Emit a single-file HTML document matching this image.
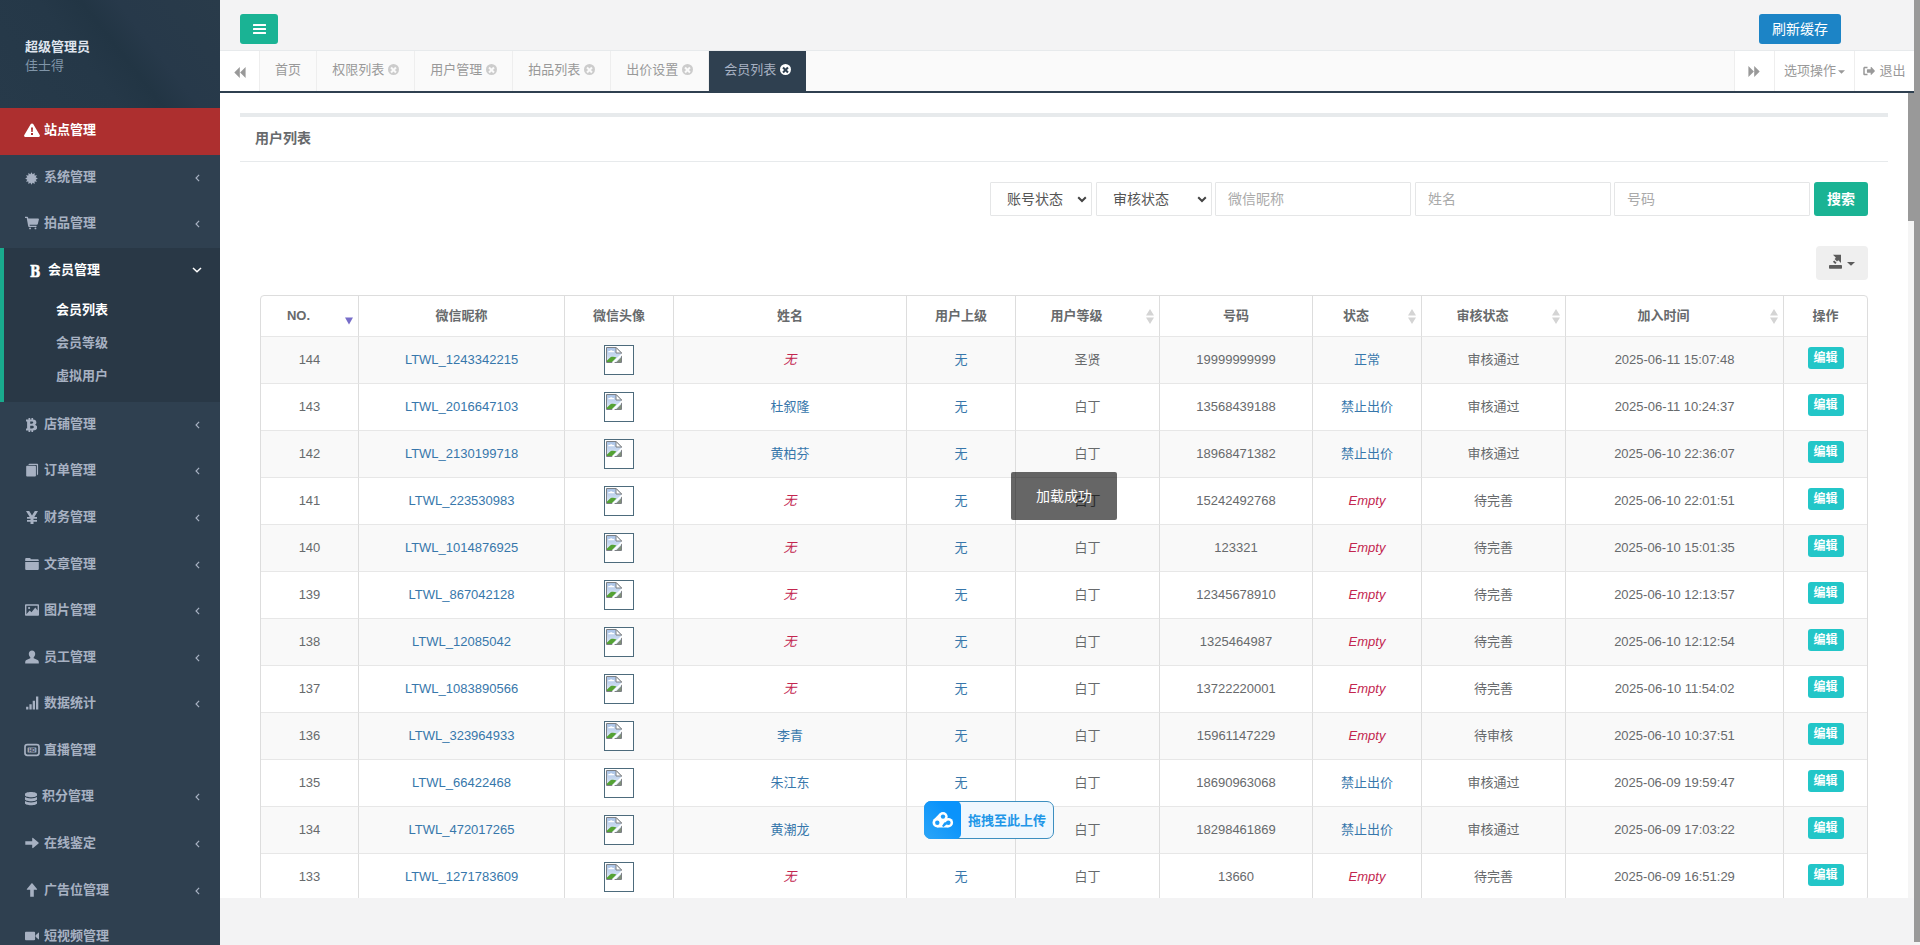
<!DOCTYPE html>
<html lang="zh-CN">
<head>
<meta charset="utf-8">
<title>后台管理</title>
<style>
*{box-sizing:border-box;}
html,body{margin:0;padding:0;width:1920px;height:945px;overflow:hidden;}
body{font-family:"Liberation Sans","Noto Sans CJK SC",sans-serif;font-size:13px;line-height:1.42857;color:#676a6c;background:#f3f3f4;position:relative;}
a{text-decoration:none;color:inherit;}
ul{list-style:none;margin:0;padding:0;}
svg{display:block;}

/* ---------- sidebar ---------- */
#side{position:absolute;left:0;top:0;width:220px;height:945px;background:#2f4050;overflow:hidden;}
#side .hd{height:108px;background:#263949;background-image:linear-gradient(52deg,#273a4a 0%,#253848 40%,#223544 54%,#27394a 66%,#293b4a 100%);padding:38px 25px 0 25px;}
#side .hd strong{display:block;color:#dfe4ed;font-weight:bold;font-size:13px;line-height:18px;}
#side .hd span{display:block;color:#8095a8;font-size:13px;line-height:19px;}
#side li.m>a{display:block;position:relative;height:46.57px;padding:14px 20px 14px 25px;color:#a7b1c2;font-weight:bold;font-size:13px;line-height:18.57px;white-space:nowrap;}
#side li.m>a .ic{position:absolute;left:25px;top:15px;width:14px;height:14px;}
#side li.m>a .tx{position:absolute;left:44px;top:13px;}
#side li.m>a .ar{position:absolute;left:195px;top:19px;width:5px;height:8px;}
#side li.site>a{background:#ad2f2f;color:#fff;}
#side li.act{background:#293846;border-left:4px solid #19aa8d;padding-bottom:9px;}
#side li.act>a{color:#fff;padding-left:21px;}
#side li.act>a .ic{left:25px;}
#side li.act>a .tx{left:44px;}
#side li.act>a .ar{left:188px;top:19px;width:10px;height:6px;}
#side .sub a{display:block;height:32.9px;line-height:18.57px;padding:7px 10px 7px 52px;color:#a7b1c2;font-weight:bold;}
#side .sub a.on{color:#fff;}

/* ---------- top ---------- */
#top{position:absolute;left:220px;top:0;width:1694px;height:51px;background:#f3f3f4;border-bottom:1px solid #e7eaec;}
#ham{position:absolute;left:20px;top:14px;width:38px;height:30px;background:#1ab394;border-radius:3px;}
#ham i{position:absolute;left:12.500px;width:13px;height:2.400px;background:#fff;border-radius:.5px;}
#refresh{position:absolute;left:1539px;top:14px;width:82px;height:30px;background:#1c84c6;border-radius:3px;color:#fff;font-size:14px;line-height:30px;text-align:center;}

/* ---------- tabs ---------- */
#tabs{position:absolute;left:220px;top:51px;width:1694px;height:42px;background:#fafafa;border-bottom:2px solid #2f4050;}
#tabs .t{position:absolute;top:0;height:40px;line-height:38px;font-size:13px;color:#999;border-right:1px solid #eee;text-align:center;white-space:nowrap;}
#tabs .t.on{background:#2f4050;color:#a7b1c2;border-right:0;}
#tabs .x{display:inline-block;width:11px;height:11px;border-radius:50%;background:#ccc;vertical-align:-1px;margin-left:0;position:relative;}
#tabs .t.on .x{background:#fff;}
#tabs .x:before,#tabs .x:after{content:"";position:absolute;left:2px;top:4.500px;width:7px;height:2px;background:#fafafa;transform:rotate(45deg);}
#tabs .x:after{transform:rotate(-45deg);}
#tabs .t.on .x:before,#tabs .t.on .x:after{background:#2f4050;}

#tabs .rn{position:absolute;top:0;height:40px;line-height:39px;background:#fff;color:#999;font-size:13px;text-align:center;white-space:nowrap;}
/* ---------- content ---------- */
#content{position:absolute;left:220px;top:93px;width:1688px;height:805px;background:#fff;overflow:hidden;}
#ibox{position:absolute;left:20px;top:20px;width:1648px;border-top:4px solid #e7eaec;}
#ibox h5{margin:0;position:absolute;left:15px;top:10.500px;font-size:14px;font-weight:bold;color:#676a6c;line-height:20px;}
#ibox .ln{position:absolute;left:0;top:44px;width:1648px;height:1px;background:#e7eaec;}
.fc{position:absolute;top:65px;height:34px;border:1px solid #e5e6e7;background:#fff;font-size:14px;line-height:32px;color:#555;padding-left:12px;border-radius:1px;}
.fc.ph{color:#aaa;}
.fc svg{position:absolute;right:4px;top:13px;}
#search{position:absolute;left:1574px;top:65px;width:54px;height:34px;background:#1ab394;border-radius:3px;color:#fff;font-weight:bold;font-size:14px;line-height:34px;text-align:center;}
#export{position:absolute;left:1576px;top:129px;width:52px;height:34px;background:#efefef;border-radius:4px;}

table{position:absolute;left:20px;top:177.500px;width:1608px;border-collapse:separate;border-spacing:0;table-layout:fixed;border:1px solid #ddd;border-radius:4px;font-size:13px;}
th,td{border-left:1px solid #ddd;border-top:1px solid #e7e7e7;text-align:center;padding:0;vertical-align:middle;overflow:hidden;white-space:nowrap;}
th:first-child,td:first-child{border-left:0;}
th{height:40px;padding-top:1px;border-top:0;font-weight:bold;color:#676a6c;position:relative;}
td{height:47px;color:#676a6c;padding-top:.8px;}
tbody tr:nth-child(odd) td{background:#f9f9f9;}
td a{color:#3777ab;}
td .e{color:#c3264f;font-style:italic;}
td .sh{display:inline-block;position:relative;left:11px;}
td .img{display:inline-block;width:30px;height:30px;border:1px solid #4d6b7c;vertical-align:middle;position:relative;background:#fff;}
td .btn{display:inline-block;width:36px;height:22px;line-height:22px;background:#23c6c8;color:#fff;border-radius:3px;font-size:12px;font-weight:bold;position:relative;top:-2px;}
th.s{padding-right:22px;}
th .so{position:absolute;right:5px;top:13px;width:8px;height:15px;}

#toast{position:absolute;left:1011px;top:472px;width:106px;height:48px;background:rgba(0,0,0,.6);border-radius:2px;color:#fff;font-size:14px;line-height:48px;text-align:center;}
#upl{position:absolute;left:924px;top:801px;width:130px;height:38px;border:1px solid #3d8fc0;border-radius:7px;background:#eff7fe;}
#upl .b{position:absolute;left:-1px;top:-1px;width:37px;height:38px;background:linear-gradient(45deg,#2ba5f7,#0a93fb 70%);border-radius:7px 5px 5px 7px;}
#upl .w{position:absolute;left:43px;top:0;line-height:37px;font-size:13px;font-weight:bold;color:#2196e8;white-space:nowrap;}

#sb1{position:absolute;left:1908px;top:93px;width:6px;height:805px;background:#f5f5f5;}
#sb1 i{position:absolute;left:0;top:0;width:6px;height:128px;background:#999;}
#sb2{position:absolute;left:1914px;top:0;width:6px;height:945px;background:#f5f5f5;}
#sb2 i{position:absolute;left:0;top:0;width:6px;height:942px;background:#999;}
</style>
</head>
<body>
<div id="side">
  <div class="hd"><strong>超级管理员</strong><span>佳士得</span></div>
  <ul id="menu">
<li class="m site"><a><svg class="ic" viewBox="0 0 16 14" style="width:16px;height:14px;top:14.500px;left:24px"><path fill="currentColor" fill-rule="evenodd" d="M8 .400c.5 0 1 .300 1.200.700l6.500 11c.5.900-.100 1.900-1.100 1.900H1.400c-1 0-1.600-1-1.100-1.900L6.800 1.100C7 .7 7.500.4 8 .4zM7 4.500l.300 4.500h1.400L9 4.500zM7 10.100v1.800h2v-1.800z"/></svg><span class="tx">站点管理</span></a></li>
<li class="m"><a><svg class="ic" viewBox="0 0 14 14" style="width:13px;height:13px;top:17px"><path fill="currentColor" d="M7.00 0.20L8.22 2.46L10.40 1.11L10.32 3.68L12.89 3.60L11.54 5.78L13.80 7.00L11.54 8.22L12.89 10.40L10.32 10.32L10.40 12.89L8.22 11.54L7.00 13.80L5.78 11.54L3.60 12.89L3.68 10.32L1.11 10.40L2.46 8.22L0.20 7.00L2.46 5.78L1.11 3.60L3.68 3.68L3.60 1.11L5.78 2.46z"/></svg><span class="tx">系统管理</span><svg class="ar" viewBox="0 0 6 10"><path d="M5 1L1.200 5 5 9" fill="none" stroke="currentColor" stroke-width="1.500"/></svg></a></li>
<li class="m"><a><svg class="ic" viewBox="0 0 14 14"><path fill="currentColor" d="M0 .8h2.300c.4 0 .7.300.8.700L3.300 2.500H13.200c.5 0 .9.500.7 1L12.800 8c-.1.500-.5.800-1 .8H4.600l.2 1h6.700v1.200H4c-.4 0-.7-.3-.8-.7L1.700 2H0zM4.100 12.400a.95.95 0 1 0 1.900 0a.95.95 0 1 0-1.900 0M9.500 12.400a.95.95 0 1 0 1.900 0a.95.95 0 1 0-1.900 0"/></svg><span class="tx">拍品管理</span><svg class="ar" viewBox="0 0 6 10"><path d="M5 1L1.200 5 5 9" fill="none" stroke="currentColor" stroke-width="1.500"/></svg></a></li>
<li class="m act"><a><span class="ic" style="font-family:'DejaVu Serif','Liberation Serif',serif;font-weight:bold;font-size:17px;line-height:14px;width:14px;left:24px;top:16px;text-align:center;transform:scaleX(.72);-webkit-text-stroke:.7px currentColor">B</span><span class="tx" style="left:44px">会员管理</span><svg class="ar" viewBox="0 0 10 6"><path d="M1 1l4 3.800L9 1" fill="none" stroke="currentColor" stroke-width="1.500"/></svg></a><div class="sub"><a class="on">会员列表</a><a>会员等级</a><a>虚拟用户</a></div></li>
<li class="m"><a><svg class="ic" viewBox="0 0 11.500 14" style="width:11.500px;height:14px;left:25.500px;top:16.500px"><path fill="currentColor" fill-rule="evenodd" d="M0 1.500h2.500V0h1.700v1.500h1.200V0H7.100v1.600c2 .2 3.300 1.100 3.300 2.800 0 1.100-.6 1.900-1.500 2.300 1.400.4 2.300 1.300 2.300 2.700 0 2-1.600 3-4.100 3.100V14H5.400v-1.500H4.200V14H2.500v-1.500H0v-1.900h1.100V3.400H0zM4.200 3.500v2.300h1.500c.9 0 1.500-.4 1.500-1.200s-.6-1.100-1.500-1.100zM4.200 7.800v2.700H6c1.100 0 1.800-.4 1.800-1.400S7.100 7.800 6 7.800z"/></svg><span class="tx">店铺管理</span><svg class="ar" viewBox="0 0 6 10"><path d="M5 1L1.200 5 5 9" fill="none" stroke="currentColor" stroke-width="1.500"/></svg></a></li>
<li class="m"><a><svg class="ic" viewBox="0 0 14 14" style="width:13px;left:26px"><path fill="currentColor" d="M2.300 1.500L3.500.4h8.700c.4 0 .8.300.8.800v10.300l-1.300 1.300V2.200c0-.4-.3-.7-.7-.7zM.2 3.300c0-.5.4-.9.900-.9h8.700c.5 0 .9.400.9.900v9.800c0 .5-.4.900-.9.900H1.100c-.5 0-.9-.4-.9-.9z"/></svg><span class="tx">订单管理</span><svg class="ar" viewBox="0 0 6 10"><path d="M5 1L1.200 5 5 9" fill="none" stroke="currentColor" stroke-width="1.500"/></svg></a></li>
<li class="m"><a><svg class="ic" viewBox="0 0 12 13" style="width:12px;height:13px;left:25.500px;top:15.500px"><path fill="currentColor" d="M0 0h3.200L6 4.600 8.800 0H12L8.300 5.900H11v1.900H7.500v1.100H11v1.900H7.500V13h-3v-2.200H1V8.900h3.500V7.800H1V5.900h2.700z"/></svg><span class="tx">财务管理</span><svg class="ar" viewBox="0 0 6 10"><path d="M5 1L1.200 5 5 9" fill="none" stroke="currentColor" stroke-width="1.500"/></svg></a></li>
<li class="m"><a><svg class="ic" viewBox="0 0 14 14"><path fill="currentColor" d="M.2 2c0-.5.4-.9.900-.9h3.700c.5 0 .9.400.9.900v.3h7.200c.5 0 .9.400.9.900v.8H.2zM.2 5h13.600v7.100c0 .5-.4.900-.9.900H1.100c-.5 0-.9-.4-.9-.9z"/></svg><span class="tx">文章管理</span><svg class="ar" viewBox="0 0 6 10"><path d="M5 1L1.200 5 5 9" fill="none" stroke="currentColor" stroke-width="1.500"/></svg></a></li>
<li class="m"><a><svg class="ic" viewBox="0 0 14 14"><path fill="currentColor" fill-rule="evenodd" d="M.8 1.300h12.400c.4 0 .8.400.8.800v9.800c0 .4-.4.800-.8.800H.8c-.4 0-.8-.4-.8-.8V2.100c0-.4.400-.8.800-.8zM1.400 2.700v8.600l3.300-3.700 1.800 1.600 3.800-4.800 2.300 3V2.700zM3 5a1.100 1.100 0 1 0 2.200 0A1.100 1.100 0 1 0 3 5"/></svg><span class="tx">图片管理</span><svg class="ar" viewBox="0 0 6 10"><path d="M5 1L1.200 5 5 9" fill="none" stroke="currentColor" stroke-width="1.500"/></svg></a></li>
<li class="m"><a><svg class="ic" viewBox="0 0 14 14"><path fill="currentColor" d="M7 .4c1.900 0 3.200 1.400 3.200 3.400 0 1.400-.6 2.700-1.500 3.500v.9l3.900 1.800c.8.400 1.200 1 1.200 1.900v1.500H.2v-1.500c0-.9.400-1.500 1.200-1.900l3.900-1.800v-.9C4.400 6.500 3.800 5.200 3.800 3.800 3.800 1.800 5.100.4 7 .4z"/></svg><span class="tx">员工管理</span><svg class="ar" viewBox="0 0 6 10"><path d="M5 1L1.200 5 5 9" fill="none" stroke="currentColor" stroke-width="1.500"/></svg></a></li>
<li class="m"><a><svg class="ic" viewBox="0 0 14 14"><path fill="currentColor" d="M11 .5h2.300v13H11zM7.700 4.800H10v8.700H7.700zM4.400 8.200h2.300v5.300H4.400zM1.100 10.700h2.300v2.800H1.100z"/></svg><span class="tx">数据统计</span><svg class="ar" viewBox="0 0 6 10"><path d="M5 1L1.200 5 5 9" fill="none" stroke="currentColor" stroke-width="1.500"/></svg></a></li>
<li class="m"><a><svg class="ic" viewBox="0 0 16 14" style="width:16px;left:24px"><rect x="1" y="1.600" width="14" height="10.800" rx="2.300" fill="none" stroke="currentColor" stroke-width="1.700"/><rect x="3.600" y="4.400" width="8.800" height="5.200" rx=".6" fill="currentColor"/><text x="8" y="8.700" font-size="4.600" font-weight="bold" text-anchor="middle" fill="#2f4050" font-family="Liberation Sans,sans-serif">HD</text></svg><span class="tx">直播管理</span></a></li>
<li class="m"><a><svg class="ic" viewBox="0 0 12 14" style="width:12px;top:17.500px"><path fill="currentColor" d="M6 0c3.300 0 6 .9 6 2v1.200c0 1.100-2.700 2-6 2s-6-.9-6-2V2C0 .9 2.700 0 6 0zM0 5c1 .900 3.400 1.400 6 1.400S11 5.900 12 5v2.200c0 1.100-2.700 2-6 2s-6-.9-6-2zM0 9c1 .900 3.400 1.400 6 1.400S11 9.900 12 9v2.200c0 1.100-2.700 2-6 2s-6-.9-6-2z"/></svg><span class="tx" style="left:42px">积分管理</span><svg class="ar" viewBox="0 0 6 10"><path d="M5 1L1.200 5 5 9" fill="none" stroke="currentColor" stroke-width="1.500"/></svg></a></li>
<li class="m"><a><svg class="ic" viewBox="0 0 14 14"><path fill="currentColor" d="M.3 5.200h6.900V2.300c0-.5.500-.7.900-.4l5.400 4.500c.4.300.4.800 0 1.100L8.100 12c-.4.300-.9.100-.9-.4V8.800H.3z"/></svg><span class="tx">在线鉴定</span><svg class="ar" viewBox="0 0 6 10"><path d="M5 1L1.200 5 5 9" fill="none" stroke="currentColor" stroke-width="1.500"/></svg></a></li>
<li class="m"><a><svg class="ic" viewBox="0 0 14 14"><path fill="currentColor" d="M5.200 13.700V6.800H2.300c-.5 0-.7-.5-.4-.9L6.400.5c.3-.4.800-.4 1.100 0L12 5.900c.3.400.1.900-.4.900H8.800v6.900z"/></svg><span class="tx">广告位管理</span><svg class="ar" viewBox="0 0 6 10"><path d="M5 1L1.200 5 5 9" fill="none" stroke="currentColor" stroke-width="1.500"/></svg></a></li>
<li class="m"><a><svg class="ic" viewBox="0 0 14 14"><path fill="currentColor" d="M.9 2.800h8.300c.5 0 .9.400.9.900v6.600c0 .5-.4.900-.9.900H.9c-.5 0-.9-.4-.9-.9V3.700c0-.5.400-.9.900-.9zM10.600 6.300L13.400 3.700c.3-.3.600-.1.600.2v6.200c0 .4-.3.500-.6.200L10.600 7.700z"/></svg><span class="tx">短视频管理</span></a></li>
  </ul>
</div>
<div id="top">
  <div id="ham"><i style="top:10px"></i><i style="top:14px"></i><i style="top:18px"></i></div>
  <div id="refresh">刷新缓存</div>
</div>
<div id="tabs">
  <div class="rn" style="left:0;width:40px;border-right:1px solid #eee"><svg viewBox="0 0 12 10" preserveAspectRatio="none" style="position:absolute;left:14px;top:15.500px;width:12px;height:11px"><path fill="#999" d="M5.800 0v10L.300 5zM11.600 0v10L6.100 5z"/></svg></div>
  <div class="t" style="left:40px;width:57px">首页</div>
  <div class="t" style="left:97px;width:98px">权限列表 <i class="x"></i></div>
  <div class="t" style="left:195px;width:98px">用户管理 <i class="x"></i></div>
  <div class="t" style="left:293px;width:98px">拍品列表 <i class="x"></i></div>
  <div class="t" style="left:391px;width:98px">出价设置 <i class="x"></i></div>
  <div class="t on" style="left:489px;width:97px">会员列表 <i class="x"></i></div>
  <div class="rn" style="left:1514px;width:40px;border-left:1px solid #eee"><svg viewBox="0 0 12 10" preserveAspectRatio="none" style="position:absolute;left:13px;top:15px;width:12px;height:11px"><path fill="#999" d="M.400 0v10l5.500-5zM6.200 0v10l5.500-5z"/></svg></div>
  <div class="rn" style="left:1554px;width:80px;border-left:1px solid #eee">选项操作<svg viewBox="0 0 8 4" style="display:inline-block;width:7px;height:4px;margin-left:2px;vertical-align:1px"><path fill="#999" d="M0 0h8L4 4z"/></svg></div>
  <div class="rn" style="left:1634px;width:60px;border-left:1px solid #eee"><svg viewBox="0 0 14 12" style="display:inline-block;width:12px;height:10px;vertical-align:-1px;margin-right:4px"><path fill="#999" d="M5.200.800v1.800H2.400c-.3 0-.5.200-.5.500v5.800c0 .3.200.5.500.5h2.800v1.800H1.800C.9 11.200.100 10.400.100 9.500v-7C.100 1.600.9.800 1.800.8zM9 1.700c0-.5.500-.7.900-.4l3.900 4c.3.400.3.900 0 1.300l-3.900 4c-.4.300-.9.100-.9-.4V8.200H5.200c-.4 0-.7-.3-.7-.7v-3c0-.4.300-.7.700-.7H9z"/></svg>退出</div>
</div>
<div id="content">
  <div id="ibox">
    <h5>用户列表</h5>
    <div class="ln"></div>
    <div class="fc" style="left:750px;width:102px;padding-left:16px">账号状态<svg viewBox="0 0 10 7" width="10" height="7"><path d="M1.200 1.200l3.800 3.800 3.800-3.800" fill="none" stroke="#444" stroke-width="2"/></svg></div>
    <div class="fc" style="left:856px;width:116px;padding-left:16px">审核状态<svg viewBox="0 0 10 7" width="10" height="7"><path d="M1.200 1.200l3.800 3.800 3.800-3.800" fill="none" stroke="#444" stroke-width="2"/></svg></div>
    <div class="fc ph" style="left:975px;width:196px">微信昵称</div>
    <div class="fc ph" style="left:1175px;width:196px">姓名</div>
    <div class="fc ph" style="left:1374px;width:196px">号码</div>
    <div id="search">搜索</div>
    <div id="export"><svg viewBox="0 0 52 34" style="position:absolute;left:0;top:0;width:52px;height:34px"><rect x="13" y="19" width="13" height="3.700" rx=".8" fill="#5c5c5c"/><path fill="#5c5c5c" d="M17 8.800h8v8.100l-2.700-2.700-1.300 1.300-2.400-2.400 1.300-1.300zM18.300 14.400l2.300 2.300-1.400 1.400-2.300-2.300z"/><path fill="#5c5c5c" d="M31 15.900h8l-4 3.900z"/></svg></div>
    <table>
<colgroup><col style="width:97px"><col style="width:206px"><col style="width:109px"><col style="width:233px"><col style="width:109px"><col style="width:144px"><col style="width:153px"><col style="width:109px"><col style="width:144px"><col style="width:218px"><col style="width:84px"></colgroup>
<thead><tr>
<th class="s">NO.<svg class="so" viewBox="0 0 8 15" style="top:15px"><path fill="#776dc9" d="M0 6.500h8L4 13.500z"/></svg></th>
<th>微信昵称</th>
<th>微信头像</th>
<th>姓名</th>
<th>用户上级</th>
<th class="s">用户等级<svg class="so" viewBox="0 0 8 15"><path fill="#d4d4d4" d="M4 0l4 6.500H0zM4 15L0 8.500h8z"/></svg></th>
<th>号码</th>
<th class="s">状态<svg class="so" viewBox="0 0 8 15"><path fill="#d4d4d4" d="M4 0l4 6.500H0zM4 15L0 8.500h8z"/></svg></th>
<th class="s">审核状态<svg class="so" viewBox="0 0 8 15"><path fill="#d4d4d4" d="M4 0l4 6.500H0zM4 15L0 8.500h8z"/></svg></th>
<th class="s">加入时间<svg class="so" viewBox="0 0 8 15"><path fill="#d4d4d4" d="M4 0l4 6.500H0zM4 15L0 8.500h8z"/></svg></th>
<th>操作</th>
</tr></thead><tbody>
<tr><td>144</td><td><a>LTWL_1243342215</a></td><td><span class="img"><svg viewBox="0 0 16 16" style="position:absolute;left:1px;top:1px;width:16px;height:16px"><defs><linearGradient id="sk" x1="0" y1="0" x2="0" y2="1"><stop offset="0" stop-color="#a8c2e6"/><stop offset="1" stop-color="#e3ecf8"/></linearGradient></defs><path d="M.500.500H10L15.500 6v9.500H.500z" fill="url(#sk)" stroke="#7c8084" stroke-width="1"/><path d="M10 .500V6h5.500z" fill="#fff" stroke="#7c8084" stroke-width="1" stroke-linejoin="round"/><path d="M2 5.200c0-.9 1-1.300 1.800-1.100.4-1 2.400-1 2.800 0 .9-.2 1.900.2 1.900 1.100z" fill="#fff"/><path d="M1 15V13.500L4.500 10.200C6 9.400 8.500 9.600 10.500 10.500L6 15z" fill="#54a234"/><path d="M10.500 15L15 10.500V15z" fill="#7f8f78"/><path d="M6.300 16.500L16.500 6.800" stroke="#fff" stroke-width="1.700" fill="none"/></svg></span></td><td><span class="e">无</span></td><td><a>无</a></td><td>圣贤</td><td>19999999999</td><td><a>正常</a></td><td>审核通过</td><td>2025-06-11 15:07:48</td><td><span class="btn">编辑</span></td></tr>
<tr><td>143</td><td><a>LTWL_2016647103</a></td><td><span class="img"><svg viewBox="0 0 16 16" style="position:absolute;left:1px;top:1px;width:16px;height:16px"><defs><linearGradient id="sk" x1="0" y1="0" x2="0" y2="1"><stop offset="0" stop-color="#a8c2e6"/><stop offset="1" stop-color="#e3ecf8"/></linearGradient></defs><path d="M.500.500H10L15.500 6v9.500H.500z" fill="url(#sk)" stroke="#7c8084" stroke-width="1"/><path d="M10 .500V6h5.500z" fill="#fff" stroke="#7c8084" stroke-width="1" stroke-linejoin="round"/><path d="M2 5.200c0-.9 1-1.300 1.800-1.100.4-1 2.400-1 2.800 0 .9-.2 1.900.2 1.900 1.100z" fill="#fff"/><path d="M1 15V13.500L4.500 10.200C6 9.400 8.500 9.600 10.500 10.500L6 15z" fill="#54a234"/><path d="M10.500 15L15 10.500V15z" fill="#7f8f78"/><path d="M6.300 16.500L16.500 6.800" stroke="#fff" stroke-width="1.700" fill="none"/></svg></span></td><td><a>杜叙隆</a></td><td><a>无</a></td><td>白丁</td><td>13568439188</td><td><a>禁止出价</a></td><td>审核通过</td><td>2025-06-11 10:24:37</td><td><span class="btn">编辑</span></td></tr>
<tr><td>142</td><td><a>LTWL_2130199718</a></td><td><span class="img"><svg viewBox="0 0 16 16" style="position:absolute;left:1px;top:1px;width:16px;height:16px"><defs><linearGradient id="sk" x1="0" y1="0" x2="0" y2="1"><stop offset="0" stop-color="#a8c2e6"/><stop offset="1" stop-color="#e3ecf8"/></linearGradient></defs><path d="M.500.500H10L15.500 6v9.500H.500z" fill="url(#sk)" stroke="#7c8084" stroke-width="1"/><path d="M10 .500V6h5.500z" fill="#fff" stroke="#7c8084" stroke-width="1" stroke-linejoin="round"/><path d="M2 5.200c0-.9 1-1.300 1.800-1.100.4-1 2.400-1 2.800 0 .9-.2 1.900.2 1.900 1.100z" fill="#fff"/><path d="M1 15V13.500L4.500 10.200C6 9.400 8.500 9.600 10.500 10.500L6 15z" fill="#54a234"/><path d="M10.500 15L15 10.500V15z" fill="#7f8f78"/><path d="M6.300 16.500L16.500 6.800" stroke="#fff" stroke-width="1.700" fill="none"/></svg></span></td><td><a>黄柏芬</a></td><td><a>无</a></td><td>白丁</td><td>18968471382</td><td><a>禁止出价</a></td><td>审核通过</td><td>2025-06-10 22:36:07</td><td><span class="btn">编辑</span></td></tr>
<tr><td>141</td><td><a>LTWL_223530983</a></td><td><span class="img"><svg viewBox="0 0 16 16" style="position:absolute;left:1px;top:1px;width:16px;height:16px"><defs><linearGradient id="sk" x1="0" y1="0" x2="0" y2="1"><stop offset="0" stop-color="#a8c2e6"/><stop offset="1" stop-color="#e3ecf8"/></linearGradient></defs><path d="M.500.500H10L15.500 6v9.500H.500z" fill="url(#sk)" stroke="#7c8084" stroke-width="1"/><path d="M10 .500V6h5.500z" fill="#fff" stroke="#7c8084" stroke-width="1" stroke-linejoin="round"/><path d="M2 5.200c0-.9 1-1.300 1.800-1.100.4-1 2.400-1 2.800 0 .9-.2 1.900.2 1.900 1.100z" fill="#fff"/><path d="M1 15V13.500L4.500 10.200C6 9.400 8.500 9.600 10.500 10.500L6 15z" fill="#54a234"/><path d="M10.500 15L15 10.500V15z" fill="#7f8f78"/><path d="M6.300 16.500L16.500 6.800" stroke="#fff" stroke-width="1.700" fill="none"/></svg></span></td><td><span class="e">无</span></td><td><a>无</a></td><td>白丁</td><td>15242492768</td><td><span class="e">Empty</span></td><td>待完善</td><td>2025-06-10 22:01:51</td><td><span class="btn">编辑</span></td></tr>
<tr><td>140</td><td><a>LTWL_1014876925</a></td><td><span class="img"><svg viewBox="0 0 16 16" style="position:absolute;left:1px;top:1px;width:16px;height:16px"><defs><linearGradient id="sk" x1="0" y1="0" x2="0" y2="1"><stop offset="0" stop-color="#a8c2e6"/><stop offset="1" stop-color="#e3ecf8"/></linearGradient></defs><path d="M.500.500H10L15.500 6v9.500H.500z" fill="url(#sk)" stroke="#7c8084" stroke-width="1"/><path d="M10 .500V6h5.500z" fill="#fff" stroke="#7c8084" stroke-width="1" stroke-linejoin="round"/><path d="M2 5.200c0-.9 1-1.300 1.800-1.100.4-1 2.400-1 2.800 0 .9-.2 1.900.2 1.900 1.100z" fill="#fff"/><path d="M1 15V13.500L4.500 10.200C6 9.400 8.500 9.600 10.500 10.500L6 15z" fill="#54a234"/><path d="M10.500 15L15 10.500V15z" fill="#7f8f78"/><path d="M6.300 16.500L16.500 6.800" stroke="#fff" stroke-width="1.700" fill="none"/></svg></span></td><td><span class="e">无</span></td><td><a>无</a></td><td>白丁</td><td>123321</td><td><span class="e">Empty</span></td><td>待完善</td><td>2025-06-10 15:01:35</td><td><span class="btn">编辑</span></td></tr>
<tr><td>139</td><td><a>LTWL_867042128</a></td><td><span class="img"><svg viewBox="0 0 16 16" style="position:absolute;left:1px;top:1px;width:16px;height:16px"><defs><linearGradient id="sk" x1="0" y1="0" x2="0" y2="1"><stop offset="0" stop-color="#a8c2e6"/><stop offset="1" stop-color="#e3ecf8"/></linearGradient></defs><path d="M.500.500H10L15.500 6v9.500H.500z" fill="url(#sk)" stroke="#7c8084" stroke-width="1"/><path d="M10 .500V6h5.500z" fill="#fff" stroke="#7c8084" stroke-width="1" stroke-linejoin="round"/><path d="M2 5.200c0-.9 1-1.300 1.800-1.100.4-1 2.400-1 2.800 0 .9-.2 1.900.2 1.900 1.100z" fill="#fff"/><path d="M1 15V13.500L4.500 10.200C6 9.400 8.500 9.600 10.500 10.500L6 15z" fill="#54a234"/><path d="M10.500 15L15 10.500V15z" fill="#7f8f78"/><path d="M6.300 16.500L16.500 6.800" stroke="#fff" stroke-width="1.700" fill="none"/></svg></span></td><td><span class="e">无</span></td><td><a>无</a></td><td>白丁</td><td>12345678910</td><td><span class="e">Empty</span></td><td>待完善</td><td>2025-06-10 12:13:57</td><td><span class="btn">编辑</span></td></tr>
<tr><td>138</td><td><a>LTWL_12085042</a></td><td><span class="img"><svg viewBox="0 0 16 16" style="position:absolute;left:1px;top:1px;width:16px;height:16px"><defs><linearGradient id="sk" x1="0" y1="0" x2="0" y2="1"><stop offset="0" stop-color="#a8c2e6"/><stop offset="1" stop-color="#e3ecf8"/></linearGradient></defs><path d="M.500.500H10L15.500 6v9.500H.500z" fill="url(#sk)" stroke="#7c8084" stroke-width="1"/><path d="M10 .500V6h5.500z" fill="#fff" stroke="#7c8084" stroke-width="1" stroke-linejoin="round"/><path d="M2 5.200c0-.9 1-1.300 1.800-1.100.4-1 2.400-1 2.800 0 .9-.2 1.900.2 1.900 1.100z" fill="#fff"/><path d="M1 15V13.500L4.500 10.200C6 9.400 8.500 9.600 10.500 10.500L6 15z" fill="#54a234"/><path d="M10.500 15L15 10.500V15z" fill="#7f8f78"/><path d="M6.300 16.500L16.500 6.800" stroke="#fff" stroke-width="1.700" fill="none"/></svg></span></td><td><span class="e">无</span></td><td><a>无</a></td><td>白丁</td><td>1325464987</td><td><span class="e">Empty</span></td><td>待完善</td><td>2025-06-10 12:12:54</td><td><span class="btn">编辑</span></td></tr>
<tr><td>137</td><td><a>LTWL_1083890566</a></td><td><span class="img"><svg viewBox="0 0 16 16" style="position:absolute;left:1px;top:1px;width:16px;height:16px"><defs><linearGradient id="sk" x1="0" y1="0" x2="0" y2="1"><stop offset="0" stop-color="#a8c2e6"/><stop offset="1" stop-color="#e3ecf8"/></linearGradient></defs><path d="M.500.500H10L15.500 6v9.500H.500z" fill="url(#sk)" stroke="#7c8084" stroke-width="1"/><path d="M10 .500V6h5.500z" fill="#fff" stroke="#7c8084" stroke-width="1" stroke-linejoin="round"/><path d="M2 5.200c0-.9 1-1.300 1.800-1.100.4-1 2.400-1 2.800 0 .9-.2 1.900.2 1.900 1.100z" fill="#fff"/><path d="M1 15V13.500L4.500 10.200C6 9.400 8.500 9.600 10.500 10.500L6 15z" fill="#54a234"/><path d="M10.500 15L15 10.500V15z" fill="#7f8f78"/><path d="M6.300 16.500L16.500 6.800" stroke="#fff" stroke-width="1.700" fill="none"/></svg></span></td><td><span class="e">无</span></td><td><a>无</a></td><td>白丁</td><td>13722220001</td><td><span class="e">Empty</span></td><td>待完善</td><td>2025-06-10 11:54:02</td><td><span class="btn">编辑</span></td></tr>
<tr><td>136</td><td><a>LTWL_323964933</a></td><td><span class="img"><svg viewBox="0 0 16 16" style="position:absolute;left:1px;top:1px;width:16px;height:16px"><defs><linearGradient id="sk" x1="0" y1="0" x2="0" y2="1"><stop offset="0" stop-color="#a8c2e6"/><stop offset="1" stop-color="#e3ecf8"/></linearGradient></defs><path d="M.500.500H10L15.500 6v9.500H.500z" fill="url(#sk)" stroke="#7c8084" stroke-width="1"/><path d="M10 .500V6h5.500z" fill="#fff" stroke="#7c8084" stroke-width="1" stroke-linejoin="round"/><path d="M2 5.200c0-.9 1-1.300 1.800-1.100.4-1 2.400-1 2.800 0 .9-.2 1.900.2 1.900 1.100z" fill="#fff"/><path d="M1 15V13.500L4.500 10.200C6 9.400 8.500 9.600 10.500 10.500L6 15z" fill="#54a234"/><path d="M10.500 15L15 10.500V15z" fill="#7f8f78"/><path d="M6.300 16.500L16.500 6.800" stroke="#fff" stroke-width="1.700" fill="none"/></svg></span></td><td><a>李青</a></td><td><a>无</a></td><td>白丁</td><td>15961147229</td><td><span class="e">Empty</span></td><td>待审核</td><td>2025-06-10 10:37:51</td><td><span class="btn">编辑</span></td></tr>
<tr><td>135</td><td><a>LTWL_66422468</a></td><td><span class="img"><svg viewBox="0 0 16 16" style="position:absolute;left:1px;top:1px;width:16px;height:16px"><defs><linearGradient id="sk" x1="0" y1="0" x2="0" y2="1"><stop offset="0" stop-color="#a8c2e6"/><stop offset="1" stop-color="#e3ecf8"/></linearGradient></defs><path d="M.500.500H10L15.500 6v9.500H.500z" fill="url(#sk)" stroke="#7c8084" stroke-width="1"/><path d="M10 .500V6h5.500z" fill="#fff" stroke="#7c8084" stroke-width="1" stroke-linejoin="round"/><path d="M2 5.200c0-.9 1-1.300 1.800-1.100.4-1 2.400-1 2.800 0 .9-.2 1.900.2 1.900 1.100z" fill="#fff"/><path d="M1 15V13.500L4.500 10.200C6 9.400 8.500 9.600 10.500 10.500L6 15z" fill="#54a234"/><path d="M10.500 15L15 10.500V15z" fill="#7f8f78"/><path d="M6.300 16.500L16.500 6.800" stroke="#fff" stroke-width="1.700" fill="none"/></svg></span></td><td><a>朱江东</a></td><td><a>无</a></td><td>白丁</td><td>18690963068</td><td><a>禁止出价</a></td><td>审核通过</td><td>2025-06-09 19:59:47</td><td><span class="btn">编辑</span></td></tr>
<tr><td>134</td><td><a>LTWL_472017265</a></td><td><span class="img"><svg viewBox="0 0 16 16" style="position:absolute;left:1px;top:1px;width:16px;height:16px"><defs><linearGradient id="sk" x1="0" y1="0" x2="0" y2="1"><stop offset="0" stop-color="#a8c2e6"/><stop offset="1" stop-color="#e3ecf8"/></linearGradient></defs><path d="M.500.500H10L15.500 6v9.500H.500z" fill="url(#sk)" stroke="#7c8084" stroke-width="1"/><path d="M10 .500V6h5.500z" fill="#fff" stroke="#7c8084" stroke-width="1" stroke-linejoin="round"/><path d="M2 5.200c0-.9 1-1.300 1.800-1.100.4-1 2.400-1 2.800 0 .9-.2 1.900.2 1.900 1.100z" fill="#fff"/><path d="M1 15V13.500L4.500 10.200C6 9.400 8.500 9.600 10.500 10.500L6 15z" fill="#54a234"/><path d="M10.500 15L15 10.500V15z" fill="#7f8f78"/><path d="M6.300 16.500L16.500 6.800" stroke="#fff" stroke-width="1.700" fill="none"/></svg></span></td><td><a>黄潮龙</a></td><td><a>无</a></td><td>白丁</td><td>18298461869</td><td><a>禁止出价</a></td><td>审核通过</td><td>2025-06-09 17:03:22</td><td><span class="btn">编辑</span></td></tr>
<tr><td>133</td><td><a>LTWL_1271783609</a></td><td><span class="img"><svg viewBox="0 0 16 16" style="position:absolute;left:1px;top:1px;width:16px;height:16px"><defs><linearGradient id="sk" x1="0" y1="0" x2="0" y2="1"><stop offset="0" stop-color="#a8c2e6"/><stop offset="1" stop-color="#e3ecf8"/></linearGradient></defs><path d="M.500.500H10L15.500 6v9.500H.500z" fill="url(#sk)" stroke="#7c8084" stroke-width="1"/><path d="M10 .500V6h5.500z" fill="#fff" stroke="#7c8084" stroke-width="1" stroke-linejoin="round"/><path d="M2 5.200c0-.9 1-1.300 1.800-1.100.4-1 2.400-1 2.800 0 .9-.2 1.900.2 1.900 1.100z" fill="#fff"/><path d="M1 15V13.500L4.500 10.200C6 9.400 8.500 9.600 10.500 10.500L6 15z" fill="#54a234"/><path d="M10.500 15L15 10.500V15z" fill="#7f8f78"/><path d="M6.300 16.500L16.500 6.800" stroke="#fff" stroke-width="1.700" fill="none"/></svg></span></td><td><span class="e">无</span></td><td><a>无</a></td><td>白丁</td><td>13660</td><td><span class="e">Empty</span></td><td>待完善</td><td>2025-06-09 16:51:29</td><td><span class="btn">编辑</span></td></tr>
</tbody></table>
  </div>
</div>
<div id="sb1"><i></i></div>
<div id="sb2"><i></i></div>
<div id="toast">加载成功</div>
<div id="upl"><div class="b"><svg viewBox="0 0 37 38" width="37" height="38"><g fill="#fff"><circle cx="19" cy="15.800" r="4.700"/><circle cx="13.300" cy="21.700" r="4.800"/><circle cx="24.300" cy="21.700" r="4.800"/><path d="M19 15.800L13.300 21.700h11z"/><path d="M15.600 12.600L9.700 18.500 13.300 26.500h11l-1.600-9.300z"/></g><g fill="#1b9bf9"><circle cx="19" cy="15.600" r="2.200"/><circle cx="13.300" cy="21.700" r="2.200"/><circle cx="24.300" cy="21.700" r="2.300"/><path d="M24.300 20.400l-4 1.200-2.300 3.300 1.500 1 3-2.500z"/></g></svg></div><div class="w">拖拽至此上传</div></div>
</body>
</html>
